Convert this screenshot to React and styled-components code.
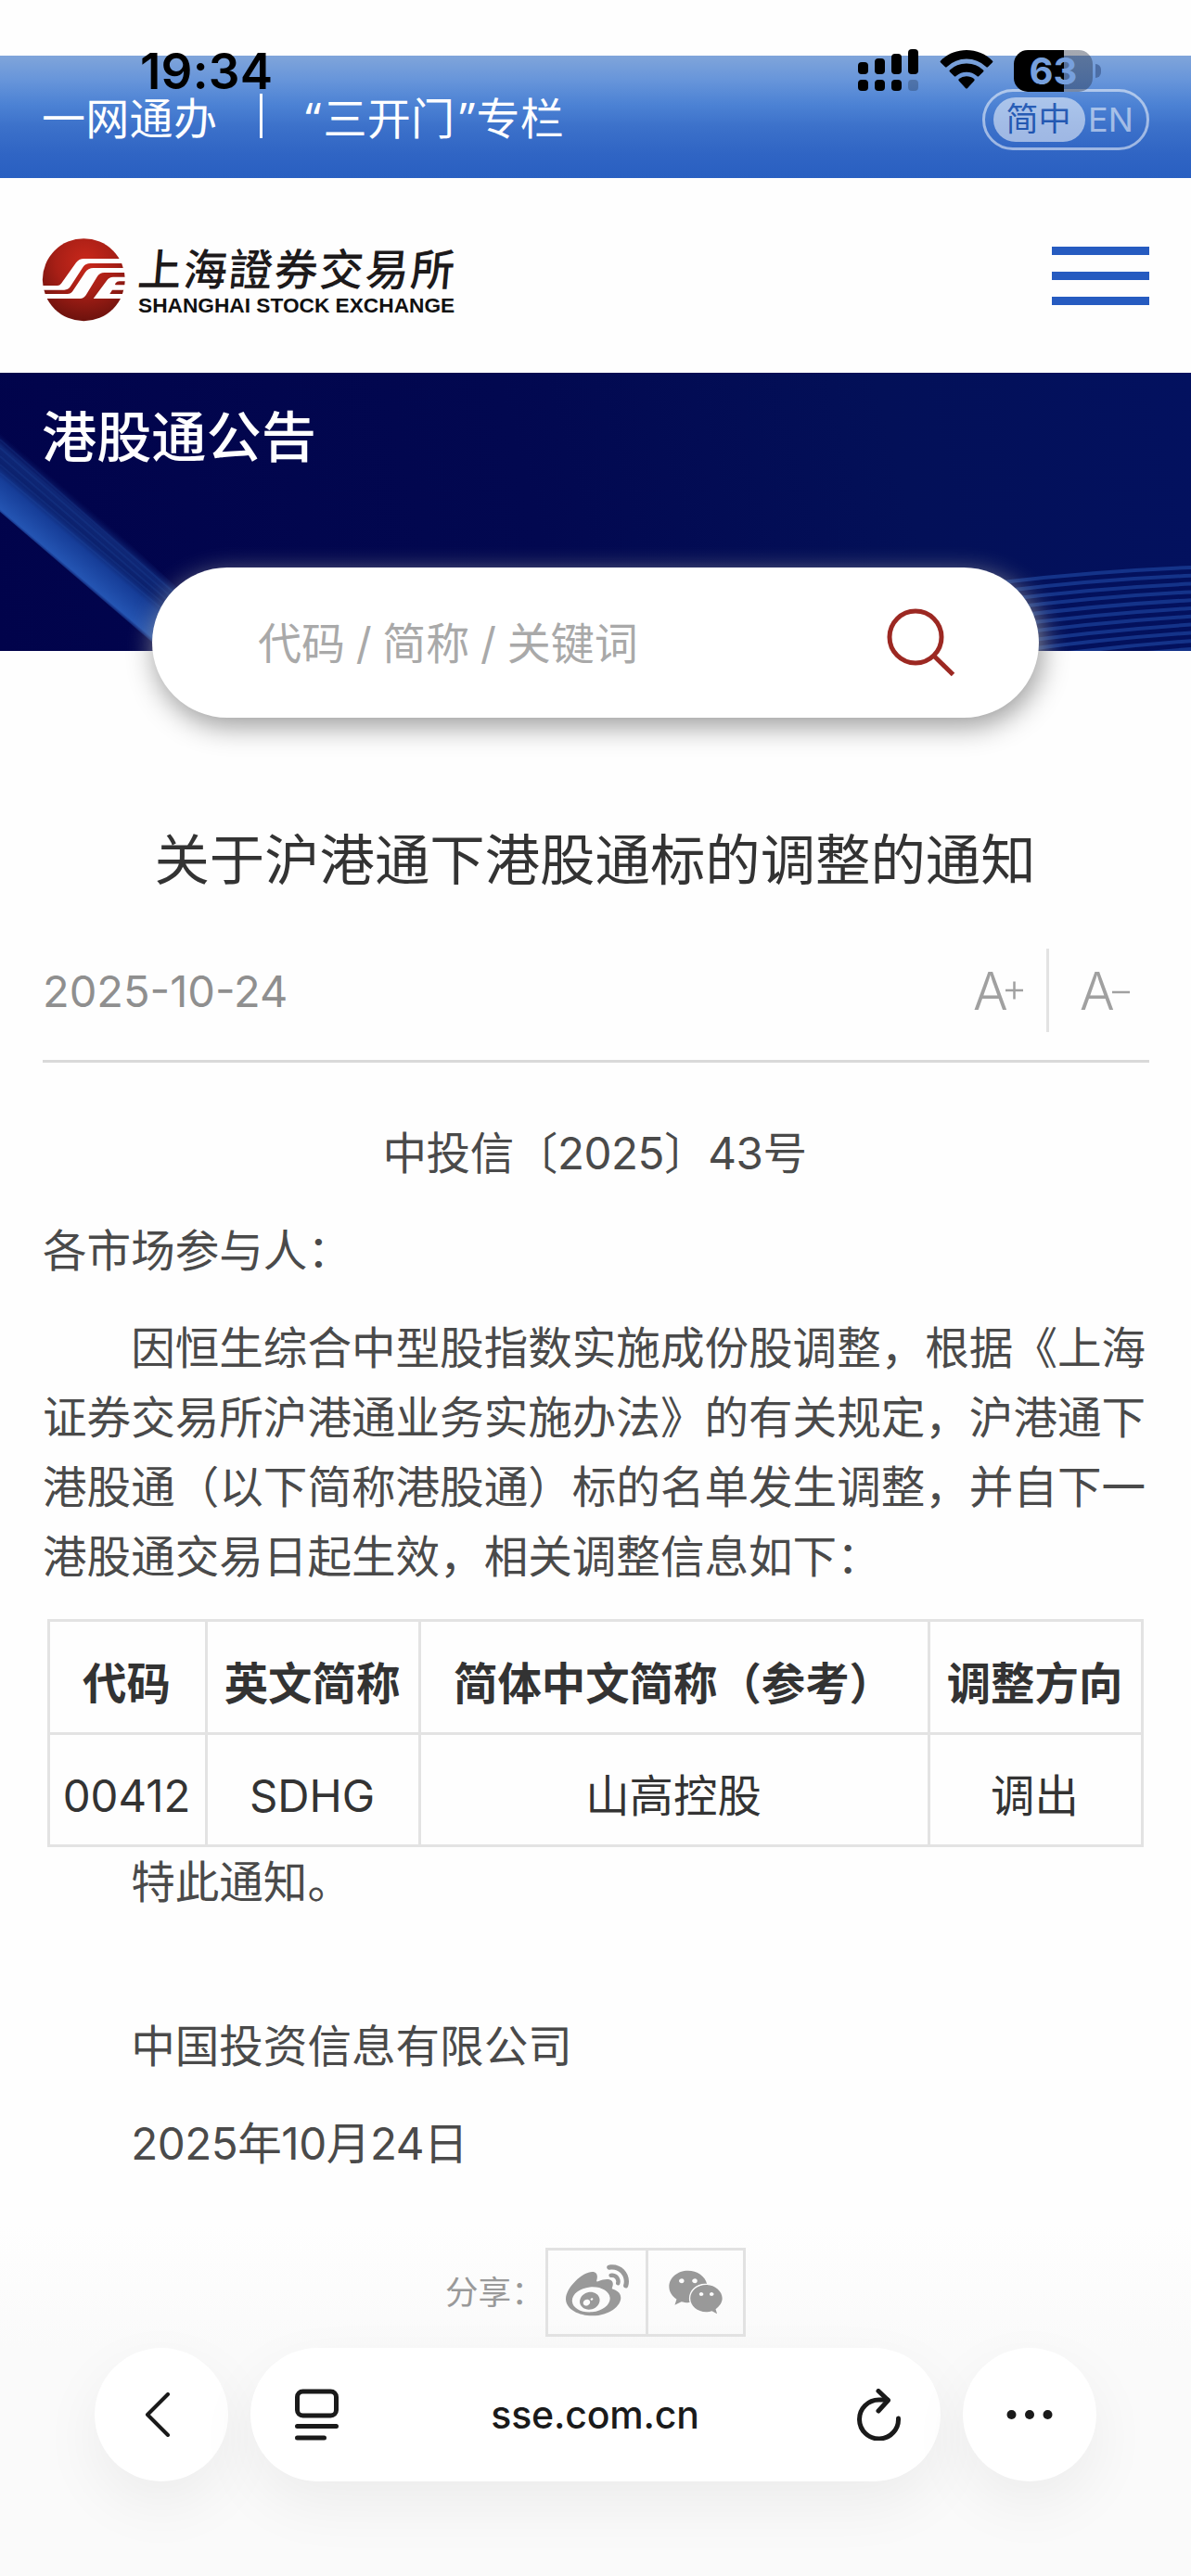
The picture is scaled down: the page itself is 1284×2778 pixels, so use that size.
import React from "react";
import styled, { createGlobalStyle } from "styled-components";
import { FaWeibo, FaWeixin } from "react-icons/fa";

const columns = [
  { label: "代码", width: 170 },
  { label: "英文简称", width: 230 },
  { label: "简体中文简称（参考）", width: 549 },
  { label: "调整方向", width: 230 },
];

const rows = [["00412", "SDHG", "山高控股", "调出"]];

const StatusBar = () => (
  <Status>
    <Clock>19:34</Clock>
    <StatusIcons>
      <svg width="66" height="46" viewBox="0 0 66 46">
        <rect x="0" y="14" width="11" height="13" rx="4" />
        <rect x="18" y="10" width="11" height="17" rx="4" />
        <rect x="36" y="5" width="11" height="22" rx="4" />
        <rect x="54" y="0" width="11" height="27" rx="4" />
        <rect x="0" y="33" width="11" height="12" rx="4" />
        <rect x="18" y="33" width="11" height="12" rx="4" />
        <rect x="36" y="33" width="11" height="12" rx="4" />
        <rect x="54" y="33" width="11" height="12" rx="4" opacity="0.22" />
      </svg>
      <svg width="58" height="46" viewBox="0 0 58 46">
        <path d="M1.2 14.6a1.5 1.5 0 0 1 0-2.2C8.500 5 18.300 1 29 1s20.500 4 27.800 11.400a1.500 1.500 0 0 1 0 2.200l-4.600 4.500a1.500 1.500 0 0 1-2.100 0A30.500 30.500 0 0 0 29 10.600 30.500 30.500 0 0 0 7.900 19.100a1.500 1.500 0 0 1-2.100 0z" />
        <path d="M11 24.600a1.500 1.500 0 0 1 0-2.200A26 26 0 0 1 29 15.500a26 26 0 0 1 18 6.900 1.500 1.500 0 0 1 0 2.200l-4.600 4.500a1.500 1.500 0 0 1-2.100 0A16.500 16.500 0 0 0 29 24.700a16.500 16.500 0 0 0-11.300 4.400 1.500 1.500 0 0 1-2.100 0z" />
        <path d="M20.800 34.300a1.500 1.500 0 0 1 .1-2.200A12.500 12.500 0 0 1 29 29.300c3.100 0 5.900 1 8.100 2.800a1.500 1.500 0 0 1 .1 2.200l-7.100 7.600a1.500 1.500 0 0 1-2.200 0z" />
      </svg>
      <Battery>
        <BatteryBody>63</BatteryBody>
        <BatteryTip />
      </Battery>
    </StatusIcons>
  </Status>
);

const Emblem = () => (
  <svg width="100" height="102" viewBox="0 0 300 306">
    <defs>
      <radialGradient id="emblem" cx="0.52" cy="0.28" r="0.72">
        <stop offset="0" stopColor="#c9281b" />
        <stop offset="0.5" stopColor="#a81f16" />
        <stop offset="1" stopColor="#6d120d" />
      </radialGradient>
    </defs>
    <circle cx="151" cy="155" r="133.500" fill="url(#emblem)" />
    <g fill="#fefefe">
      <path d="M10 174H66Q73 174 78 167L126 100Q135 87 152 87H280V102H172Q157 102 149 113L107 178Q100 188 88 188H10Z" />
      <path d="M10 201H98Q109 201 115 192L155 132Q165 117 182 117H292V132H217Q203 132 195 144L158 205Q151 216 139 216H10Z" />
      <path d="M292 146H246Q233 146 226 157L182 216H292V201H235L243 188H292V172H254Q250 172 254 166Q258 160 266 160H292Z" />
    </g>
  </svg>
);

const BannerArt = () => (
  <Art viewBox="0 0 1284 300" preserveAspectRatio="none">
    <defs>
      <linearGradient
        id="beam"
        gradientUnits="userSpaceOnUse"
        x1="78"
        y1="220"
        x2="122"
        y2="168"
      >
        <stop offset="0" stopColor="#2a5fc0" stopOpacity="0" />
        <stop offset="0.08" stopColor="#2659b8" stopOpacity="0.95" />
        <stop offset="0.45" stopColor="#17409c" stopOpacity="0.95" />
        <stop offset="0.62" stopColor="#0d2673" stopOpacity="0.85" />
        <stop offset="0.85" stopColor="#143384" stopOpacity="0.75" />
        <stop offset="1" stopColor="#0a1a68" stopOpacity="0" />
      </linearGradient>
    </defs>
    <path d="M0 54L200 240L182 306L0 150Z" fill="url(#beam)" />
    {[0, 1, 2, 3, 4].map((i) => (
      <path
        key={i}
        d={`M0 ${72 + i * 9}L200 ${248 + i * 7}`}
        stroke="#2e5cb4"
        strokeOpacity="0.16"
        strokeWidth="2"
      />
    ))}
    {[0, 1, 2, 3, 4, 5, 6, 7, 8, 9, 10].map((i) => (
      <path
        key={i}
        d={`M1080 ${226 + i * 9.500}Q1180 ${214 + i * 9.200} 1284 ${210 + i * 8.800}`}
        fill="none"
        stroke="#1b3f98"
        strokeOpacity="0.75"
        strokeWidth="4"
      />
    ))}
  </Art>
);

const App = () => {
  return (
    <>
      <GlobalStyle />
      <Page>
        <StatusBar />
        <TopBar>
          <TopLinks>
            <span>一网通办</span>
            <TopDivider />
            <span>
              <Quote>“</Quote>三开门<Quote $wide>”</Quote>专栏
            </span>
          </TopLinks>
          <Language>
            <Chosen>简中</Chosen>
            <span>EN</span>
          </Language>
        </TopBar>

        <Header>
          <Logo>
            <Emblem />
            <LogoText>
              <LogoName>上海證券交易所</LogoName>
              <LogoEnglish>SHANGHAI STOCK EXCHANGE</LogoEnglish>
            </LogoText>
          </Logo>
          <Burger>
            <i />
            <i />
            <i />
          </Burger>
        </Header>

        <Banner>
          <BannerArt />
          <h2>港股通公告</h2>
        </Banner>

        <Search>
          <span>代码 / 简称 / 关键词</span>
          <svg width="74" height="74" viewBox="0 0 74 74">
            <g fill="none" stroke="#9c2822" strokeWidth="5">
              <circle cx="31" cy="31" r="28" />
              <path d="M50.500 51L71.500 71.500" />
            </g>
          </svg>
        </Search>

        <Article>
          <h1>关于沪港通下港股通标的调整的通知</h1>
          <Meta>
            <PostDate>2025-10-24</PostDate>
            <FontTools>
              <FontButton>
                A
                <svg width="19" height="20" viewBox="0 0 19 20">
                  <path d="M0 10H19M9.500 0.500V19.500" />
                </svg>
              </FontButton>
              <FontButton $divided>
                A
                <svg width="19" height="20" viewBox="0 0 19 20">
                  <path d="M0 12H19" />
                </svg>
              </FontButton>
            </FontTools>
          </Meta>

          <Paragraph $center $tight>
            中投信〔2025〕43号
          </Paragraph>
          <Paragraph>各市场参与人：</Paragraph>
          <Paragraph $indent>
            因恒生综合中型股指数实施成份股调整，根据《上海证券交易所沪港通业务实施办法》的有关规定，沪港通下港股通（以下简称港股通）标的名单发生调整，并自下一港股通交易日起生效，相关调整信息如下：
          </Paragraph>
          <Table>
            <colgroup>
              {columns.map((c) => (
                <Col key={c.label} $width={c.width} />
              ))}
            </colgroup>
            <thead>
              <tr>
                {columns.map((c) => (
                  <th key={c.label}>{c.label}</th>
                ))}
              </tr>
            </thead>
            <tbody>
              {rows.map((row) => (
                <tr key={row[0]}>
                  {row.map((cell) => (
                    <td key={cell}>{cell}</td>
                  ))}
                </tr>
              ))}
            </tbody>
          </Table>
          <Paragraph $indent $gap={0}>
            特此通知。
          </Paragraph>
          <Paragraph $indent $gap={102}>
            中国投资信息有限公司
          </Paragraph>
          <Paragraph $indent $tight>
            2025年10月24日
          </Paragraph>
        </Article>

        <BrowserBar>
          <RoundButton>
            <BackIcon width="28" height="48" viewBox="0 0 28 48">
              <path d="M25 2L3 24L25 46" strokeWidth="4" />
            </BackIcon>
          </RoundButton>
          <AddressBar>
            <svg width="48" height="56" viewBox="0 0 48 56">
              <rect x="2.500" y="3" width="42" height="26" rx="6" />
              <path d="M2.500 40.500H44.500M2.500 53H31.500" />
            </svg>
            <span>sse.com.cn</span>
            <svg width="48" height="56" viewBox="0 0 48 56">
              <path d="M44.500 32A21 21 0 1 1 23.500 12H33" />
              <path d="M23 2.500L33.500 12.500L23 24" />
            </svg>
          </AddressBar>
          <RoundButton>
            <svg width="50" height="12" viewBox="0 0 50 12">
              <g fill="#1a1a1a" stroke="none">
                <circle cx="5.500" cy="6" r="5" />
                <circle cx="25" cy="6" r="5" />
                <circle cx="44.500" cy="6" r="5" />
              </g>
            </svg>
          </RoundButton>
        </BrowserBar>

        <Share>
          <span>分享：</span>
          <ShareBox>
            <FaWeibo size={68} />
          </ShareBox>
          <ShareBox $last>
            <FaWeixin size={60} />
          </ShareBox>
        </Share>
      </Page>
    </>
  );
};

const GlobalStyle = createGlobalStyle`
  * {
    box-sizing: border-box;
    margin: 0;
    padding: 0;
  }
  body {
    background: #fefefe;
    font-family: Inter, "Noto Sans CJK SC", sans-serif;
    text-spacing-trim: space-all;
  }
  svg {
    display: block;
    flex: none;
  }
`;

const Page = styled.div`
  position: relative;
  width: 1284px;
  height: 2778px;
  padding-top: 60px;
  overflow: hidden;
  background: #fefefe;
`;

const Status = styled.div`
  position: absolute;
  z-index: 2;
  top: 48px;
  left: 151px;
  right: 97px;
  height: 56px;
  display: flex;
  align-items: center;
  justify-content: space-between;
`;

const Clock = styled.span`
  margin-top: 2px;
  font-size: 53px;
  font-weight: 600;
  line-height: 44px;
  letter-spacing: 0.2px;
  color: #000;
`;

const StatusIcons = styled.div`
  display: flex;
  align-items: center;
  gap: 22px;
`;

const Battery = styled.div`
  display: flex;
  align-items: center;
  gap: 3px;
`;

const BatteryBody = styled.div`
  width: 85px;
  height: 45px;
  border-radius: 15px;
  background: linear-gradient(
    90deg,
    #000 0 63%,
    rgba(40, 50, 70, 0.42) 63% 100%
  );
  color: #77a0dd;
  font-size: 40px;
  font-weight: 700;
  line-height: 45px;
  text-align: center;
`;

const BatteryTip = styled.i`
  width: 6px;
  height: 15px;
  border-radius: 0 6px 6px 0;
  background: #4c6ea6;
`;

const TopBar = styled.div`
  height: 132px;
  padding: 0 45px;
  display: flex;
  justify-content: space-between;
  background: linear-gradient(
    180deg,
    #80a5da 0%,
    #6795da 20%,
    #4c82d4 40%,
    #3c71ca 58%,
    #3065c4 80%,
    #295fc1 100%
  );
`;

const TopLinks = styled.div`
  height: 132px;
  padding-top: 2px;
  display: flex;
  align-items: center;
  color: #fff;
  font-family: "Noto Sans", "Noto Sans CJK SC", sans-serif;
  font-size: 47px;
  line-height: 46px;
  letter-spacing: 0.3px;
`;

const Quote = styled.span`
  margin: ${(props) => (props.$wide ? "0 1px 0 5px" : "0 2px 0 0")};
`;

const TopDivider = styled.i`
  width: 3px;
  height: 48px;
  margin: -4px 46px 0 46px;
  background: #fff;
`;

const Language = styled.div`
  width: 180px;
  height: 66px;
  margin-top: 36px;
  padding-left: 9px;
  display: flex;
  align-items: center;
  border: 3px solid #fff;
  border-radius: 33px;
  opacity: 0.52;
  color: #fff;
  font-size: 36px;
`;

const Chosen = styled.span`
  width: 99px;
  height: 48px;
  margin-right: 3px;
  padding-right: 2px;
  border-radius: 24px;
  background: #fff;
  color: #0a3f9c;
  font-size: 35px;
  line-height: 47px;
  text-align: center;
`;

const Header = styled.header`
  height: 210px;
  padding: 0 45px 0 40px;
  display: flex;
  justify-content: space-between;
`;

const Logo = styled.div`
  padding-top: 58px;
  display: flex;
`;

const LogoText = styled.div`
  padding: 14px 0 0 9px;
  white-space: nowrap;
`;

const LogoName = styled.div`
  height: 53px;
  color: #1d1a1b;
  font-size: 47px;
  font-weight: 500;
  line-height: 53px;
  letter-spacing: 2px;
  transform: skewX(-5deg);
`;

const LogoEnglish = styled.div`
  color: #111;
  font-family: "Liberation Sans", sans-serif;
  font-size: 22.700px;
  font-weight: 700;
  line-height: 24px;
`;

const Burger = styled.div`
  width: 105px;
  padding-top: 74px;
  display: flex;
  flex-direction: column;
  gap: 18px;
  i {
    height: 9px;
    background: #265bc0;
  }
`;

const Banner = styled.div`
  position: relative;
  height: 300px;
  padding: 25px 45px;
  background: linear-gradient(
    75deg,
    #01034b 0%,
    #020850 45%,
    #031058 75%,
    #03115f 100%
  );
  h2 {
    position: relative;
    color: #fff;
    font-size: 59.200px;
    font-weight: 500;
    line-height: 90px;
  }
`;

const Art = styled.svg`
  position: absolute;
  inset: 0;
  width: 100%;
  height: 100%;
`;

const Search = styled.div`
  position: relative;
  width: 956px;
  height: 162px;
  margin: -90px auto 0;
  padding: 0 90px 0 114px;
  display: flex;
  align-items: center;
  justify-content: space-between;
  border-radius: 81px;
  background: #fff;
  box-shadow: 3px 9px 30px #999;
  color: #a9a9a9;
  font-size: 47px;
  word-spacing: -1.500px;
  span {
    margin-top: -6px;
  }
`;

const Article = styled.main`
  padding: 108px 45px 0 46px;
  h1 {
    height: 90px;
    margin-left: -2px;
    color: #333;
    font-size: 59.400px;
    font-weight: 400;
    line-height: 90px;
    text-align: center;
    white-space: nowrap;
  }
`;

const Meta = styled.div`
  height: 123px;
  margin: 51px 0 60px;
  display: flex;
  justify-content: space-between;
  border-bottom: 3px solid #d9d9d9;
`;

const PostDate = styled.span`
  color: #8f8f8f;
  font-size: 47px;
  line-height: 92px;
`;

const FontTools = styled.div`
  height: 90px;
  display: flex;
`;

const FontButton = styled.button`
  display: flex;
  width: ${(props) => (props.$divided ? "111px" : "79px")};
  padding-left: ${(props) => (props.$divided ? "33px" : "0")};
  border: none;
  border-left: ${(props) => (props.$divided ? "3px solid #e3e3e3" : "none")};
  background: none;
  color: #a0a0a0;
  font-family: Inter, sans-serif;
  font-size: 56px;
  font-weight: 300;
  line-height: 92px;
  svg {
    margin: 35px 0 0 -3px;
    stroke: #a0a0a0;
    stroke-width: 2.500;
  }
`;

const Paragraph = styled.p`
  margin-top: ${(props) => props.$gap ?? 30}px;
  padding-right: ${(props) => (props.$center ? "3px" : "0")};
  color: #4a4a4a;
  font-size: 47.570px;
  line-height: 75px;
  letter-spacing: ${(props) => (props.$tight ? "-0.45px" : "0")};
  text-align: ${(props) => (props.$center ? "center" : "left")};
  text-indent: ${(props) => (props.$indent ? "2em" : "0")};
  line-break: anywhere;
`;

const Table = styled.table`
  width: 1182px;
  margin: 30px 0 0 5px;
  table-layout: fixed;
  border-collapse: collapse;
  color: #333;
  font-size: 47.400px;
  th,
  td {
    height: 121.500px;
    padding: 14px 2px 0 0;
    border: 3px solid #e3e3e3;
    line-height: 75px;
    text-align: center;
    white-space: nowrap;
  }
`;

const Col = styled.col`
  width: ${(props) => props.$width}px;
`;

const Share = styled.div`
  position: relative;
  margin-top: 75px;
  padding-left: 480px;
  display: flex;
  align-items: center;
  color: #999;
  font-size: 35.600px;
  span {
    width: 108px;
    margin-top: -5px;
    white-space: nowrap;
  }
`;

const ShareBox = styled.div`
  width: ${(props) => (props.$last ? "105px" : "111px")};
  height: 96px;
  display: flex;
  align-items: center;
  justify-content: center;
  border: 3px solid #e2e2e2;
  border-left-width: ${(props) => (props.$last ? "0" : "3px")};
`;

const BrowserBar = styled.nav`
  position: absolute;
  left: 0;
  bottom: 0;
  width: 100%;
  height: 378px;
  padding: 132px 102px 0;
  display: flex;
  gap: 24px;
  background: linear-gradient(180deg, rgba(250, 250, 250, 0), #fafafa 35%);
  svg {
    fill: none;
    stroke: #1a1a1a;
    stroke-width: 5;
    stroke-linecap: round;
    stroke-linejoin: round;
  }
`;

const RoundButton = styled.div`
  width: 144px;
  height: 144px;
  display: flex;
  flex: none;
  align-items: center;
  justify-content: center;
  border-radius: 50%;
  background: #fff;
  box-shadow: 0 24px 66px rgba(0, 0, 0, 0.06);
`;

const BackIcon = styled.svg`
  margin-right: 8px;
`;

const AddressBar = styled.div`
  width: 744px;
  height: 144px;
  padding: 0 42px 0 48px;
  display: flex;
  align-items: center;
  justify-content: space-between;
  border-radius: 72px;
  background: #fff;
  box-shadow: 0 24px 66px rgba(0, 0, 0, 0.06);
  color: #1a1a1a;
  font-size: 41px;
  font-weight: 500;
  letter-spacing: -0.200px;
  span {
    margin-right: 7px;
  }
`;

export default App;
